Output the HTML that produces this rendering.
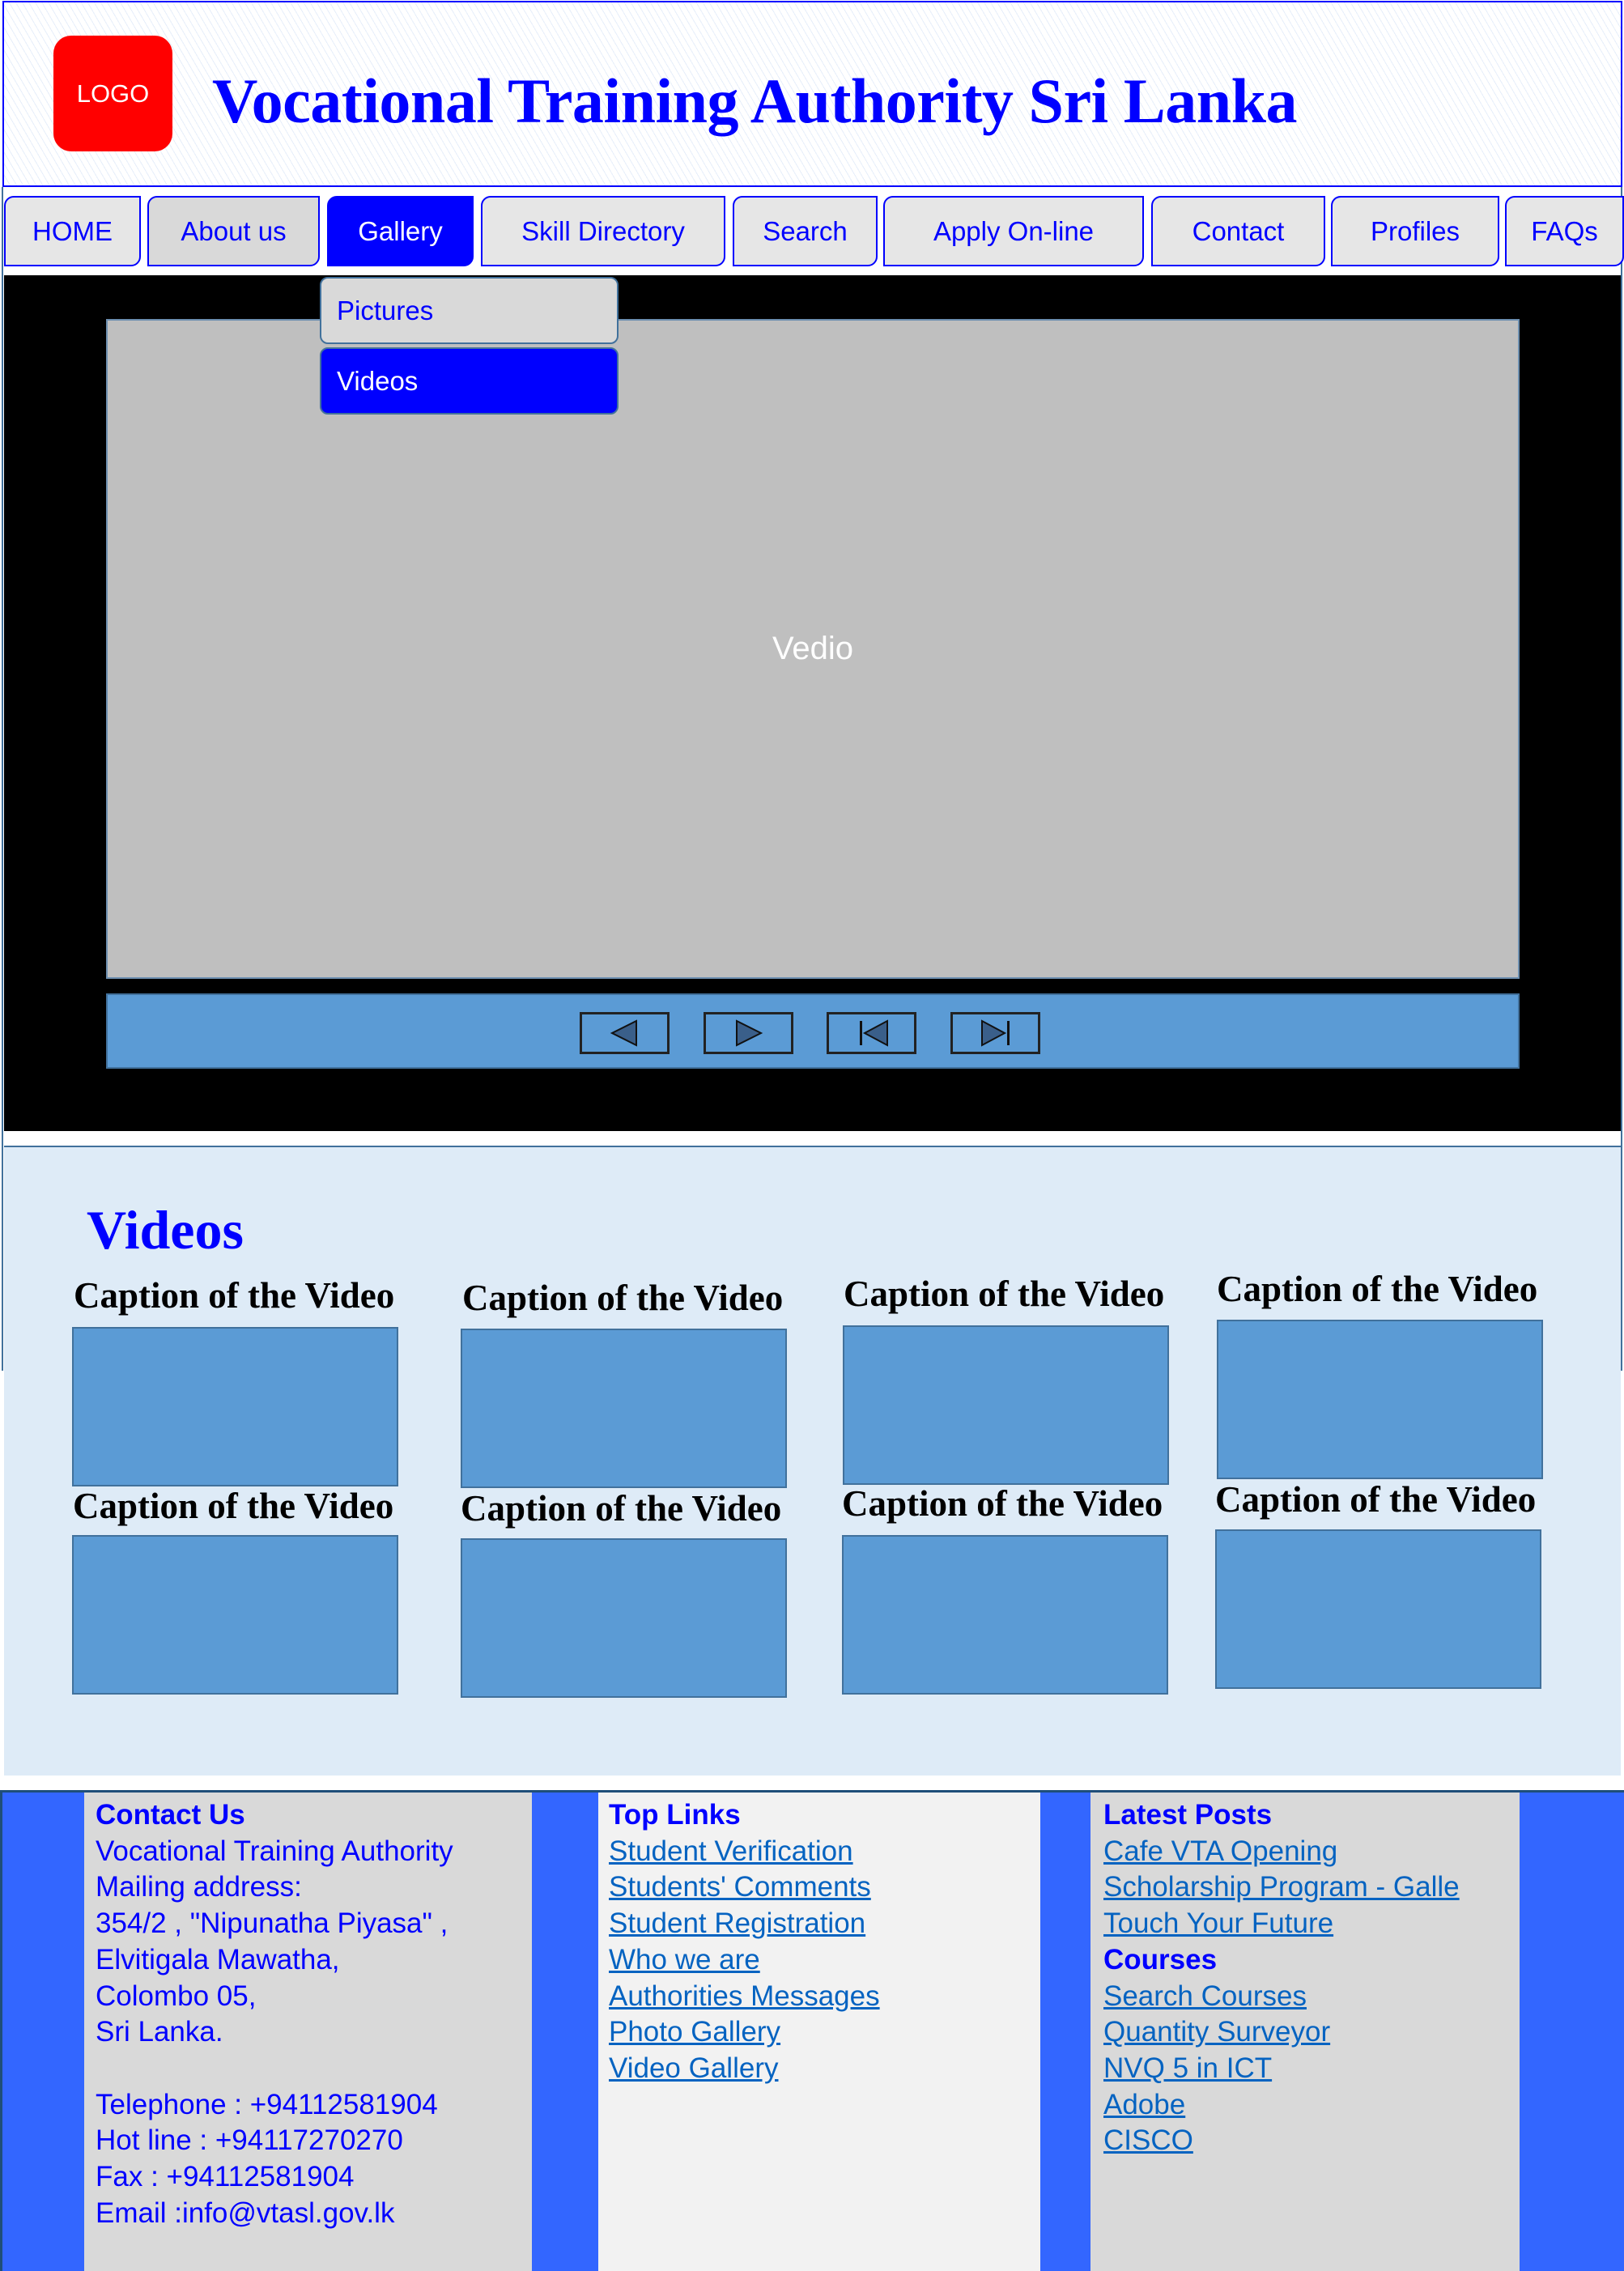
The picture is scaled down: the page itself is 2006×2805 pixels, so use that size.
<!DOCTYPE html>
<html><head><meta charset="utf-8"><style>
*{margin:0;padding:0;box-sizing:border-box}
body{width:2006px;height:2805px;position:relative;background:#fff;overflow:hidden;font-family:"Liberation Sans",sans-serif}
.a{position:absolute}
.hdr{left:3px;top:1px;width:2001px;height:230px;border:2px solid #0000ff;background:#fff repeating-linear-gradient(60deg,#fff 0 6px,#e6eefa 6px 7px)}
.logo{left:66px;top:44px;width:147px;height:143px;background:#f00;border-radius:22px;color:#fff;font-size:31px;display:flex;align-items:center;justify-content:center}
.title{left:262px;top:80px;font-family:"Liberation Serif",serif;font-weight:bold;font-size:78px;color:#0000ff;white-space:nowrap;letter-spacing:-0.5px}
.nav{top:242px;height:87px;border:2px solid #0000ff;background:#e6e6e6;border-radius:12px 0 12px 0;color:#0000ff;font-size:33px;display:flex;align-items:center;justify-content:center}
.blk{left:5px;top:340px;width:1997px;height:1057px;background:#000}
.vid{left:131px;top:394px;width:1746px;height:815px;background:#bfbfbf;border:2px solid #6d8fb0;color:#fff;font-size:40px;display:flex;align-items:center;justify-content:center}
.bar{left:131px;top:1227px;width:1746px;height:93px;background:#5b9bd5;border:2px solid #41719c}
.btn{top:1250px;width:111px;height:52px;border:3px solid #222;background:#5b9bd5}
.dd{left:395px;width:369px;height:83px;border:2px solid #41719c;border-radius:10px;font-size:33px;padding-left:19px;display:flex;align-items:center}
.sec{left:5px;top:1415px;width:1997px;height:778px;background:#deebf7;border-top:2px solid #41719c}
.vh{left:107px;top:1480px;font-family:"Liberation Serif",serif;font-weight:bold;font-size:68px;color:#0000ff}
.cap{font-family:"Liberation Serif",serif;font-weight:bold;font-size:45px;color:#000;white-space:nowrap}
.box{width:403px;height:197px;background:#5b9bd5;border:2px solid #41719c}
.ft{left:0;top:2211px;width:2006px;height:594px;background:#3366ff;border-top:3px solid #1f4e79;border-left:3px solid #1f4e79}
.col{top:2214px;height:591px;font-size:35px;line-height:44.7px;color:#0000ff;padding-top:6px}
.col b{display:block}
.col a{display:block;color:#0563c1;text-decoration:underline}
.sidel{left:2px;top:231px;width:2px;height:1462px;background:#41719c}
.sider{left:2002px;top:231px;width:2px;height:1462px;background:#41719c}
</style></head><body>
<div class="a sidel"></div><div class="a sider"></div>
<div class="a hdr"></div>
<div class="a logo">LOGO</div>
<div class="a title">Vocational Training Authority Sri Lanka</div>

<div class="a nav" style="left:5px;width:169px">HOME</div>
<div class="a nav" style="left:182px;width:213px;background:#d9d9d9">About us</div>
<div class="a nav" style="left:404px;width:181px;background:#0000ff;color:#fff">Gallery</div>
<div class="a nav" style="left:594px;width:302px">Skill Directory</div>
<div class="a nav" style="left:905px;width:179px">Search</div>
<div class="a nav" style="left:1091px;width:322px">Apply On-line</div>
<div class="a nav" style="left:1422px;width:215px">Contact</div>
<div class="a nav" style="left:1644px;width:208px">Profiles</div>
<div class="a nav" style="left:1859px;width:147px">FAQs</div>

<div class="a blk"></div>
<div class="a vid">Vedio</div>
<div class="a bar"></div>
<div class="a btn" style="left:716px"><svg width="105" height="46"><polygon points="67,8 67,38 37,23" fill="#3a5f8a" stroke="#111" stroke-width="2"/></svg></div>
<div class="a btn" style="left:869px"><svg width="105" height="46"><polygon points="38,8 38,38 68,23" fill="#3a5f8a" stroke="#111" stroke-width="2"/></svg></div>
<div class="a btn" style="left:1021px"><svg width="105" height="46"><rect x="38" y="8" width="3" height="30" fill="#111"/><polygon points="72,8 72,38 44,23" fill="#3a5f8a" stroke="#111" stroke-width="2"/></svg></div>
<div class="a btn" style="left:1174px"><svg width="105" height="46"><polygon points="36,8 36,38 64,23" fill="#3a5f8a" stroke="#111" stroke-width="2"/><rect x="67" y="8" width="3" height="30" fill="#111"/></svg></div>

<div class="a dd" style="top:342px;background:#d9d9d9;color:#0000ff">Pictures</div>
<div class="a dd" style="top:429px;background:#0000ff;color:#fff">Videos</div>

<div class="a sec"></div>
<div class="a vh">Videos</div>
<div class="a cap" style="left:91px;top:1574px">Caption of the Video</div>
<div class="a cap" style="left:571px;top:1577px">Caption of the Video</div>
<div class="a cap" style="left:1042px;top:1572px">Caption of the Video</div>
<div class="a cap" style="left:1503px;top:1566px">Caption of the Video</div>
<div class="a cap" style="left:90px;top:1834px">Caption of the Video</div>
<div class="a cap" style="left:569px;top:1837px">Caption of the Video</div>
<div class="a cap" style="left:1040px;top:1831px">Caption of the Video</div>
<div class="a cap" style="left:1501px;top:1826px">Caption of the Video</div>
<div class="a box" style="left:89px;top:1639px"></div>
<div class="a box" style="left:569px;top:1641px"></div>
<div class="a box" style="left:1041px;top:1637px"></div>
<div class="a box" style="left:1503px;top:1630px"></div>
<div class="a box" style="left:89px;top:1896px"></div>
<div class="a box" style="left:569px;top:1900px"></div>
<div class="a box" style="left:1040px;top:1896px"></div>
<div class="a box" style="left:1501px;top:1889px"></div>

<div class="a ft"></div>
<div class="a col" style="left:104px;width:553px;background:#d9d9d9;padding-left:14px">
<b>Contact Us</b>Vocational Training Authority<br>Mailing address:<br>354/2 , "Nipunatha Piyasa" ,<br>Elvitigala Mawatha,<br>Colombo 05,<br>Sri Lanka.<br><br>Telephone : +94112581904<br>Hot line : +94117270270<br>Fax : +94112581904<br>Email :info@vtasl.gov.lk</div>
<div class="a col" style="left:739px;width:546px;background:#f2f2f2;padding-left:13px">
<b>Top Links</b><a>Student Verification</a><a>Students' Comments</a><a>Student Registration</a><a>Who we are</a><a>Authorities Messages</a><a>Photo Gallery</a><a>Video Gallery</a></div>
<div class="a col" style="left:1347px;width:530px;background:#d9d9d9;padding-left:16px">
<b>Latest Posts</b><a>Cafe VTA Opening</a><a>Scholarship Program - Galle</a><a>Touch Your Future</a><b>Courses</b><a>Search Courses</a><a>Quantity Surveyor</a><a>NVQ 5 in ICT</a><a>Adobe</a><a>CISCO</a></div>
</body></html>
